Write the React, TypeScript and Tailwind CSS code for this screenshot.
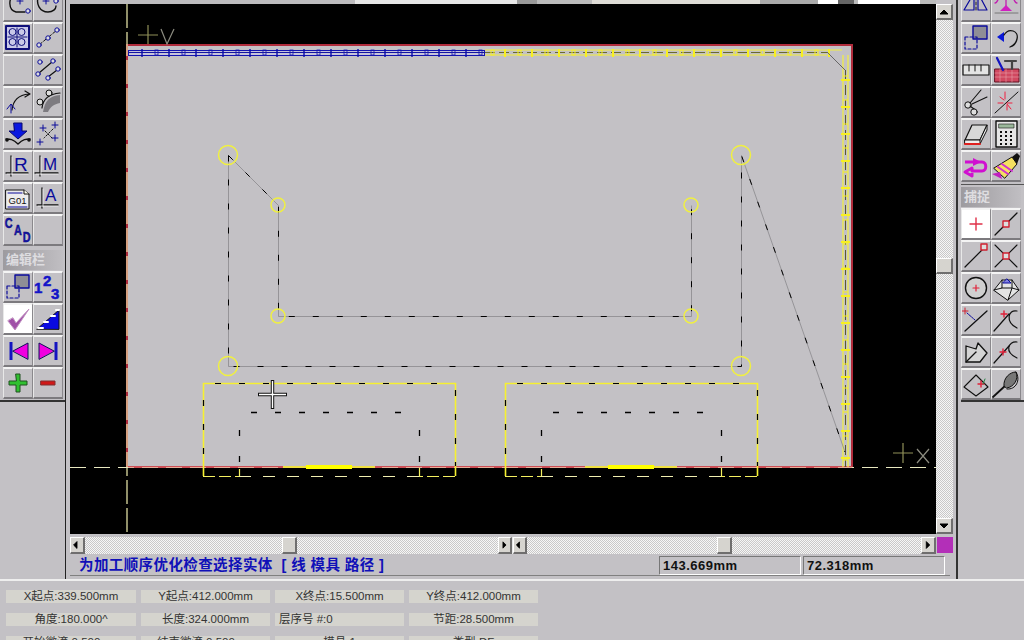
import React from "react";

const B = "#0a0a9a";
const K = "#111";
const CJK = '"Liberation Sans","Noto Sans CJK SC",sans-serif';

function Ic({ children }: { children?: React.ReactNode }) {
  return (
    <svg width="28" height="28" viewBox="0 0 28 28" fill="none" strokeLinecap="round" strokeLinejoin="round">
      {children}
    </svg>
  );
}

function Btn({ children, on }: { children?: React.ReactNode; on?: boolean }) {
  return (
    <div
      className={`flex h-[32px] w-[30px] items-center justify-center border-t-2 border-r border-b-2 border-l border-t-[#f4f4f4] border-r-[#8a888c] border-b-[#7c7a7e] border-l-[#e8e8e8] ${
        on ? "bg-white" : "bg-[#c3c1c5]"
      }`}
    >
      {children}
    </div>
  );
}

const Dot = ({ x, y, r = 2.2 }: { x: number; y: number; r?: number }) => (
  <circle cx={x} cy={y} r={r} stroke={B} strokeWidth="1" fill="#ddd" />
);
const Axes = ({ x = 8 }: { x?: number }) => (
  <g>
    <path d={`M${x} 4V24M${x - 5} 21H24`} stroke={K} strokeWidth="1.3" />
    <path d={`M${x + 1} 5V23M${x - 4} 22H24`} stroke="#fff" strokeWidth="0.7" />
  </g>
);
const Label = ({ t, x, y, s = 15 }: { t: string; x: number; y: number; s?: number }) => (
  <text x={x} y={y} fill={B} fontFamily="Liberation Sans, sans-serif" fontSize={s}>
    {t}
  </text>
);

const leftIcons: [React.ReactNode, React.ReactNode][] = [
  [
    <Ic>
      <path d="M11 2C4 6 4 18 12 20H21" stroke={K} strokeWidth="1.4" />
      <path d="M15 9H21M18 6V12" stroke={B} transform="translate(-2 0)" />
      <Dot x={24} y={19} />
    </Ic>,
    <Ic>
      <path d="M5 3C1 12 6 20 14 20C19 20 22 17 22 14" stroke={K} strokeWidth="1.4" />
      <path d="M9 9H15M12 6V12" stroke={B} />
      <Dot x={22} y={9} />
    </Ic>,
  ],
  [
    <Ic>
      <rect x="2" y="2" width="23" height="23" fill="#c9c9e8" stroke="#10107a" strokeWidth="2" />
      <path d="M5 8a3.500 3.500 0 1 1 7 0a3.500 3.500 0 1 1-7 0M14 8a3.500 3.500 0 1 1 7 0a3.500 3.500 0 1 1-7 0M5 18a3.500 3.500 0 1 1 7 0a3.500 3.500 0 1 1-7 0M14 18a3.500 3.500 0 1 1 7 0a3.500 3.500 0 1 1-7 0M4 13H23M13 4V23" stroke="#10107a" />
    </Ic>,
    <Ic>
      <path d="M5 21L23 6" stroke={K} strokeDasharray="4 2" />
      <Dot x={5} y={21} />
      <Dot x={14} y={14} />
      <Dot x={23} y={6} />
    </Ic>,
  ],
  [
    null,
    <Ic>
      <path d="M5 17L18 6M14 21L23 14" stroke={K} strokeWidth="1.2" />
      <Dot x={6} y={6} />
      <Dot x={19} y={5} />
      <Dot x={4} y={18} />
      <Dot x={14} y={22} />
      <Dot x={24} y={13} />
    </Ic>,
  ],
  [
    <Ic>
      <path d="M8 22C9 12 14 7 25 6M21 3L26 6L21 9" stroke={K} strokeWidth="1.2" />
      <path d="M7 25L7 17M3 21L7 16L11 21" stroke={B} />
    </Ic>,
    <Ic>
      <path d="M9 24C11 13 15 8 26 7V15C20 16 16 19 14 24Z" fill="#7d7b80" />
      <path d="M8 20C9 11 14 6 26 5" stroke={K} strokeWidth="1.2" />
      <circle cx="6" cy="14" r="3" stroke={K} fill="#ddd" />
      <circle cx="15" cy="5" r="3" stroke={K} fill="#ddd" />
    </Ic>,
  ],
  [
    <Ic>
      <path d="M10 3H18V11H23L14 19L5 11H10Z" fill="#0a18e0" stroke="#0a0a6a" />
      <path d="M2 19C6 19 9 19 14 24C19 19 22 19 26 19" stroke={K} strokeWidth="1.4" />
      <circle cx="3" cy="20" r="1.800" fill={K} />
      <circle cx="25" cy="20" r="1.800" fill={K} />
    </Ic>,
    <Ic>
      <path d="M9 5V11M6 8H12M21 2V8M18 5H24M6 19V25M3 22H9M21 15V21M18 18H24" stroke={B} />
      <path d="M11 11L18 18M19 9L10 18" stroke={K} strokeDasharray="2 2" />
    </Ic>,
  ],
  [
    <Ic>
      <Axes x={7} />
      <Label t="R" x={10} y={19} s={19} />
    </Ic>,
    <Ic>
      <Axes x={6} />
      <Label t="M" x={9} y={18} s={17} />
    </Ic>,
  ],
  [
    <Ic>
      <path d="M2 6H20L25 10V25H2Z" fill="#ececec" stroke={K} />
      <path d="M20 6V10H25" stroke={K} fill="#ffe" />
      <path d="M4 9H18M4 23H23" stroke={B} />
      <text x="4.500" y="20" fontFamily="Liberation Sans, sans-serif" fontSize="9.500" fill={K}>
        G01
      </text>
    </Ic>,
    <Ic>
      <Axes x={8} />
      <Label t="A" x={11} y={17} s={17} />
    </Ic>,
  ],
  [
    <svg width="28" height="28" viewBox="0 0 28 28">
      <g fontFamily="Liberation Sans, sans-serif" fontWeight="700" fill="#1414b8" stroke="#0a0a5a" strokeWidth="0.5">
        <text x="1" y="12" fontSize="15" transform="scale(0.72 1)">C</text>
        <text x="14" y="19" fontSize="15" transform="scale(0.72 1)">A</text>
        <text x="26" y="26" fontSize="15" transform="scale(0.72 1)">D</text>
      </g>
    </svg>,
    null,
  ],
];

const SelIcon = () => (
  <Ic>
    <rect x="11" y="2" width="14" height="13" fill="#8f8e96" stroke="#0a0a9a" strokeWidth="1.4" />
    <rect x="3" y="13" width="12" height="12" stroke="#0a0a9a" strokeWidth="1.2" strokeDasharray="3 2" fill="none" />
  </Ic>
);

const editIcons: [React.ReactNode, React.ReactNode][] = [
  [
    <SelIcon />,
    <svg width="28" height="28" viewBox="0 0 28 28">
      <g fontFamily="Liberation Sans, sans-serif" fontWeight="700" fill="#1414c8" stroke="#1414c8" strokeWidth="0.5">
        <text x="0" y="20" fontSize="15">1</text>
        <text x="9" y="13" fontSize="15">2</text>
        <text x="17" y="26" fontSize="15">3</text>
      </g>
    </svg>,
  ],
  [
    <Ic>
      <path d="M4 16L11 25L25 4L12 18L9 13Z" fill="#a050a8" stroke="#c090c0" />
    </Ic>,
    <Ic>
      <path d="M3 24L25 5V24Z" fill="#0a0ae0" stroke={K} />
      <path d="M4 23H9M10 17H14M17 11H21M22 5H25" stroke="#fff" strokeWidth="2" />
    </Ic>,
  ],
  [
    <Ic>
      <path d="M7 5V23" stroke="#1414c0" strokeWidth="3" strokeLinecap="butt" />
      <path d="M9 14L24 6V22Z" fill="#f000e0" stroke="#10105a" />
    </Ic>,
    <Ic>
      <path d="M22 5V23" stroke="#1414c0" strokeWidth="3" strokeLinecap="butt" />
      <path d="M20 14L5 6V22Z" fill="#f000e0" stroke="#10105a" />
    </Ic>,
  ],
  [
    <Ic>
      <path d="M12 5H16V12H23V16H16V23H12V16H5V12H12Z" fill="#30c030" stroke="#205020" />
    </Ic>,
    <Ic>
      <rect x="7" y="12" width="14" height="4" fill="#d01818" stroke="#803030" />
    </Ic>,
  ],
];

const rightIcons: [React.ReactNode, React.ReactNode][] = [
  [
    <Ic>
      <path d="M12 1L2 18H12ZM16 1V18H25Z" stroke={B} strokeWidth="1.2" fill="none" />
      <path d="M14 0V20" stroke={K} strokeDasharray="3 2" />
    </Ic>,
    <Ic>
      <path d="M2 4H26M14 0V16M7 4C6 9 4 11 3 11M21 4C22 9 24 11 25 11" stroke="#c020b0" strokeWidth="1.3" />
      <path d="M8 19L14 13L20 19Z" fill="#d020c0" />
      <path d="M3 21H26" stroke="#777" />
    </Ic>,
  ],
  [
    <SelIcon />,
    <Ic>
      <path d="M5 13L12 8V18Z" fill="#0a18d8" />
      <path d="M12 11C17 3 27 7 25 15C24 20 21 22 18 23" stroke={K} strokeWidth="1.3" />
    </Ic>,
  ],
  [
    <Ic>
      <rect x="1" y="9" width="26" height="10" fill="#e4e4e4" stroke={K} strokeWidth="1.2" />
      <path d="M7 9V15M13 9V15M19 9V15" stroke={K} />
    </Ic>,
    <Ic>
      <rect x="3" y="13" width="24" height="13" fill="#d04860" stroke="#601020" />
      <path d="M3 17H27M3 21H27M8 13V26M14 13V26M20 13V26" stroke="#e8a0a8" strokeWidth="0.6" />
      <path d="M5 2L11 14" stroke="#1414c0" strokeWidth="2.2" />
      <path d="M13 5H24M20 5V13" stroke="#444" strokeWidth="2.2" />
    </Ic>,
  ],
  [
    <Ic>
      <circle cx="6" cy="17" r="3.200" stroke={K} fill="#ddd" />
      <circle cx="12" cy="24" r="3.200" stroke={K} fill="#ddd" />
      <path d="M8 15L19 2M12 21L8 18M10 16L25 9" stroke={K} strokeWidth="1.1" />
    </Ic>,
    <Ic>
      <path d="M3 25L26 4" stroke={K} strokeWidth="1" />
      <path d="M13 4V11M8 9L12 12M6 15H11M20 15H15M19 21L15 16M15 22V17" stroke="#f02040" />
    </Ic>,
  ],
  [
    <Ic>
      <path d="M3 20L10 5H25L18 20Z" fill="#d8d8d8" stroke={K} strokeWidth="1.2" />
      <path d="M3 20H18V24H3ZM18 20L25 5V10L18 24" fill="#eee" stroke={K} />
      <path d="M3 24H18" stroke="#e02020" strokeWidth="2" />
    </Ic>,
    <Ic>
      <rect x="4" y="1" width="21" height="26" fill="#e6e6e6" stroke={K} strokeWidth="1.4" />
      <rect x="7" y="4" width="15" height="4" fill="#9bb89b" stroke={K} strokeWidth="0.6" />
      <path d="M8 12H10M13 12H15M18 12H20M8 16H10M13 16H15M18 16H20M8 20H10M13 20H15M18 20H20M8 24H10M13 24H15M18 24H20" stroke={K} strokeWidth="2" strokeLinecap="butt" />
    </Ic>,
  ],
  [
    <Ic>
      <path d="M3 10H20C25 10 25 19 20 19H10V16L3 20L10 24V21" stroke="#d010d0" strokeWidth="3" fill="none" strokeLinecap="butt" />
      <path d="M11 6L19 10L11 14Z" fill="#d010d0" />
    </Ic>,
    <Ic>
      <path d="M2 16L20 5L25 12L13 26Z" fill="#f4e060" stroke={K} />
      <path d="M6 15L16 22M10 12L20 19" stroke="#d030d0" strokeWidth="2" />
      <path d="M20 5L25 1L28 4L25 12Z" fill="#111" />
      <path d="M0 22L8 20L10 27Z" fill="#c020c0" />
    </Ic>,
  ],
];

const snapIcons: [React.ReactNode, React.ReactNode][] = [
  [
    <Ic>
      <path d="M14 8V20M8 14H20" stroke="#e03048" strokeWidth="1.4" />
    </Ic>,
    <Ic>
      <path d="M3 25L25 3" stroke={K} strokeWidth="1.2" />
      <rect x="11" y="11" width="6" height="6" fill="#ddd" stroke="#d02030" strokeWidth="1.4" />
    </Ic>,
  ],
  [
    <Ic>
      <path d="M3 25L21 7" stroke={K} strokeWidth="1.2" />
      <rect x="19" y="2" width="6" height="6" fill="#ddd" stroke="#d02030" strokeWidth="1.4" />
    </Ic>,
    <Ic>
      <path d="M3 25L25 3M3 3L25 25" stroke={K} strokeWidth="1.1" />
      <rect x="11" y="11" width="6" height="6" fill="#ddd" stroke="#d02030" strokeWidth="1.4" />
    </Ic>,
  ],
  [
    <Ic>
      <circle cx="14" cy="14" r="10.500" stroke={K} strokeWidth="1.4" fill="#cfcfcf" />
      <path d="M14 11V17M11 14H17" stroke="#e02038" strokeWidth="1.2" />
    </Ic>,
    <Ic>
      <path d="M2 16L10 6H20L27 16L16 26Z" fill="#e4e4e4" stroke={K} />
      <path d="M10 6L10 14L2 16M20 6V14L27 16M10 14H20L16 26" stroke={K} />
      <path d="M11 9H19L15 5Z" fill="#8080e0" stroke={B} />
    </Ic>,
  ],
  [
    <Ic>
      <path d="M3 25L25 5" stroke={K} strokeWidth="1.3" />
      <path d="M3 2V8M0 5H6" stroke="#d02030" />
      <path d="M5 7L13 14" stroke={B} strokeDasharray="2 1" />
    </Ic>,
    <Ic>
      <path d="M2 25L17 8" stroke={K} strokeWidth="1.2" />
      <path d="M25 5C16 3 13 16 25 22" stroke={K} strokeWidth="1.2" />
      <path d="M12 5V11M9 8H15" stroke="#e02038" strokeWidth="1.4" />
    </Ic>,
  ],
  [
    <Ic>
      <path d="M4 8V24H18L25 15L16 5L14 11L4 8" fill="#d4d4d4" stroke={K} strokeWidth="1.3" />
      <path d="M4 24L14 14" stroke={K} strokeWidth="1.3" />
    </Ic>,
    <Ic>
      <path d="M2 25L17 8" stroke={K} strokeWidth="1.2" />
      <path d="M25 4C16 3 12 14 25 20" stroke={K} strokeWidth="1.2" />
      <path d="M11 11V17M8 14H14" stroke="#e02038" strokeWidth="1.4" />
    </Ic>,
  ],
  [
    <Ic>
      <path d="M2 17L14 5L26 17L14 26Z" stroke={K} strokeWidth="1.1" />
      <path d="M19 11V17M16 14H22" stroke="#e02038" strokeWidth="1.4" />
      <path d="M23 9L21 14" stroke="#208040" />
    </Ic>,
    <Ic>
      <path d="M1 27L14 15" stroke={K} strokeWidth="1.8" />
      <path d="M12 16C11 8 18 2 24 2C27 9 22 17 15 18Z" fill="#777" stroke={K} />
      <path d="M24 2C29 10 24 20 15 19" stroke={K} />
    </Ic>,
  ],
];

function Rows({ rows, onAt }: { rows: [React.ReactNode, React.ReactNode][]; onAt?: number }) {
  return (
    <>
      {rows.map((r, i) => (
        <div key={i} className="flex">
          <Btn on={onAt === i}>{r[0]}</Btn>
          <Btn>{r[1]}</Btn>
        </div>
      ))}
    </>
  );
}

function Title({ t, cls }: { t: string; cls: string }) {
  return (
    <div
      className={`flex items-center bg-gradient-to-r from-[#9d9b9f] to-[#c0bec2] pl-[3px] text-[13px] font-bold text-[#dedde0] ${cls}`}
      style={{ fontFamily: CJK }}
    >
      {t}
    </div>
  );
}

const Track = ({ cls }: { cls: string }) => (
  <div className={`bg-[repeating-conic-gradient(#f6f6f6_0_25%,#c9c8c8_0_50%)] bg-[length:2px_2px] ${cls}`} />
);

function SBtn({ dir, cls }: { dir?: "l" | "r" | "u" | "d"; cls: string }) {
  const p = { l: "M7 3V11L3 7Z", r: "M5 3V11L9 7Z", u: "M3 9H11L7 5Z", d: "M3 5H11L7 9Z" };
  return (
    <div className={`flex shrink-0 items-center justify-center border-t border-r-2 border-b-2 border-l border-t-white border-r-[#6f6e6e] border-b-[#6f6e6e] border-l-white bg-[#d6d4cf] ${cls}`}>
      {dir && (
        <svg width="14" height="14" viewBox="0 0 14 14">
          <path d={p[dir]} fill="#000" stroke="#000" />
        </svg>
      )}
    </div>
  );
}

const seq = (a: number, b: number, s: number) => {
  const o: number[] = [];
  for (let v = a; v <= b; v += s) o.push(v);
  return o;
};

function LowerBox({ x }: { x: number }) {
  const r = x + 252;
  const blob = x + 80;
  return (
    <g>
      <path d={`M${x}.5 476V383.500H${r}.5V476`} stroke="#f6f030" strokeWidth="1.6" />
      <path d={`M${x} 476.500H${x + 36}.5V467M${r} 476.500H${x + 216}.5V467`} stroke="#f4f060" strokeWidth="1.2" strokeDasharray="12 4" />
      <path d={`M${x + 12} 383.500H${r}`} stroke="#000" strokeWidth="1.2" strokeDasharray="6 18" />
      <path d={`M${x}.5 400V466M${r}.5 390V466`} stroke="#000" strokeWidth="1.2" strokeDasharray="6 18" />
      <path d={`M${x + 48} 412.500H${x + 200}`} stroke="#000" strokeWidth="1.3" strokeDasharray="6 18" />
      <path d={`M${x + 36}.5 430V462M${x + 216}.5 430V462`} stroke="#000" strokeWidth="1.3" strokeDasharray="6 20" />
      <path d={`M${x + 36} 476.500H${x + 216}`} stroke="#f0eeb0" strokeWidth="1.2" strokeDasharray="12 12" />
      <path d={`M${blob} 467H${blob + 92}`} stroke="#f0e040" strokeWidth="2" />
      <path d={`M${blob + 23} 467H${blob + 69}`} stroke="#ffff00" strokeWidth="4" />
    </g>
  );
}

function Drawing() {
  const cross = seq(142, 480, 27);
  const box = seq(155, 480, 27);
  const ycross = seq(505, 830, 27);
  const ybox = seq(491, 830, 27);
  const vt = seq(70, 460, 24);
  return (
    <svg width="866" height="530" viewBox="70 4 866 530" fill="none" className="block bg-black">
      <rect x="127" y="45" width="725" height="422" fill="#c3c1c5" stroke="#b02c3c" strokeWidth="2" />
      <path d="M127 4V534" stroke="#f0eeb0" strokeWidth="1.2" strokeDasharray="24 4" />
      <path d="M70 467.500H936" stroke="#e8e8c0" strokeWidth="1" strokeDasharray="16 8" />
      <path d="M128 467H852" stroke="#e87070" strokeWidth="1" />
      {/* axes */}
      <path d="M138 35H158M148 25V44" stroke="#8f8f58" strokeWidth="1.2" />
      <path d="M161 29L167 44L174 29" stroke="#8c8c80" strokeWidth="1.2" />
      <path d="M893 453H913M903 443V463" stroke="#8f8f58" strokeWidth="1.2" />
      <path d="M917 449L929 463M929 449L917 463" stroke="#8c8c80" strokeWidth="1.2" />
      {/* blue strip */}
      <rect x="128.500" y="50.500" width="356" height="5" fill="#c6c4dc" stroke="#1414b0" strokeWidth="1" />
      <path d="M128 52.500H485" stroke="#1414a0" strokeWidth="1" />
      {cross.map((v) => (
        <path key={v} d={`M${v} 49V57`} stroke="#0a0aa8" strokeWidth="1.4" />
      ))}
      {box.map((v) => (
        <rect key={v} x={v} y="50" width="3" height="5" stroke="#1414b0" strokeWidth="0.8" />
      ))}
      {/* yellow strip */}
      <path d="M485 50H842M485 55H827" stroke="#f4f040" strokeWidth="1.2" />
      <path d="M485 52.500H827" stroke="#6a6a30" strokeWidth="1" strokeDasharray="10 4" />
      {ycross.map((v) => (
        <path key={v} d={`M${v} 49V57`} stroke="#f8f020" strokeWidth="2" />
      ))}
      {ybox.map((v) => (
        <rect key={v} x={v} y="50" width="3" height="5" stroke="#f8f020" strokeWidth="1" />
      ))}
      <path d="M843 55V467M848 55V467" stroke="#f4f040" strokeWidth="1.2" />
      <path d="M827 52L845 70" stroke="#666" strokeWidth="1" />
      <path d="M845.500 70V467" stroke="#5a5a30" strokeWidth="1" strokeDasharray="10 5" />
      {seq(80, 460, 27).map((v) => (
        <path key={v} d={`M841 ${v}H850`} stroke="#f8f020" strokeWidth="2" />
      ))}
      {vt.map((v) => (
        <path key={v} d={`M843 ${v + 6}H848`} stroke="#f8f020" strokeWidth="1" />
      ))}
      {/* contour */}
      <path
        d="M228.500 155.500L278.500 205.500V316.500H691.500V205.500M228.500 155.500V366.500H741.500V155.500L845 452"
        stroke="#8a898d"
        strokeWidth="0.8"
      />
      <path
        d="M228.500 155.500L278.500 205.500V316.500H691.500V205.500M228.500 155.500V366.500H741.500V155.500L845 452"
        stroke="#000"
        strokeWidth="1"
        strokeDasharray="6 18"
      />
      {[
        [228, 155],
        [741, 155],
        [228, 366],
        [741, 366],
      ].map(([x, y]) => (
        <circle key={`${x}${y}`} cx={x} cy={y} r="9.500" stroke="#f0f040" strokeWidth="1.5" />
      ))}
      {[
        [278, 205],
        [691, 205],
        [278, 316],
        [691, 316],
      ].map(([x, y]) => (
        <circle key={`${x}${y}`} cx={x} cy={y} r="7" stroke="#f0f040" strokeWidth="1.5" />
      ))}
      <LowerBox x={203} />
      <LowerBox x={505} />
      {/* crosshair cursor */}
      <path d="M258 394.500H287M272.500 380V409" stroke="#111" strokeWidth="3.4" strokeLinecap="butt" />
      <path d="M259 394.500H286M272.500 381V408" stroke="#fff" strokeWidth="1.4" strokeLinecap="butt" />
    </svg>
  );
}

const cells: { t: string; left?: boolean }[] = [
  { t: "X起点:339.500mm" },
  { t: "Y起点:412.000mm" },
  { t: "X终点:15.500mm" },
  { t: "Y终点:412.000mm" },
  { t: "角度:180.000^" },
  { t: "长度:324.000mm" },
  { t: "层序号 #:0", left: true },
  { t: "节距:28.500mm" },
  { t: "开始微滴:0.500mm" },
  { t: "结束微滴:0.500mm" },
  { t: "模具:1" },
  { t: "类型:DF" },
];

const strip: [string, string][] = [
  ["w-[285px]", "bg-[#bdbcbe]"],
  ["w-[162px]", "bg-[#e6e6e6]"],
  ["w-[20px]", "bg-[#999999]"],
  ["w-[55px]", "bg-[#bbbbbb]"],
  ["w-[168px]", "bg-[#dedcd6]"],
  ["w-[58px]", "bg-[#aaaaaa]"],
  ["w-[20px]", "bg-white"],
  ["w-[16px]", "bg-[#666666]"],
  ["w-[4px]", "bg-[#bbbbbb]"],
  ["w-[62px]", "bg-white"],
  ["w-[16px]", "bg-[#bbbbbb]"],
];

export default function App() {
  return (
    <div className="flex h-[640px] w-[1024px] flex-col overflow-hidden bg-[#c3c1c5]" style={{ fontFamily: CJK }}>
      <div className="flex h-[579px] shrink-0">
        {/* left toolbar */}
        <aside className="flex w-[66px] shrink-0 flex-col overflow-hidden border-r border-r-[#222]">
          <div className="-mt-[10px] flex h-[412px] shrink-0 flex-col border-b-2 border-b-[#333] pl-[3px]">
            <Rows rows={leftIcons} />
            <Title t="编辑栏" cls="mt-[4px] mb-[1px] h-[20px] w-[60px]" />
            <Rows rows={editIcons} onAt={1} />
          </div>
        </aside>

        {/* centre */}
        <main className="flex w-[892px] shrink-0 flex-col border-r-2 border-r-[#333] pl-[4px]">
          <div className="flex h-[4px] shrink-0">
            {strip.map(([w, c], i) => (
              <div key={i} className={`${w} ${c}`} />
            ))}
          </div>
          <div className="flex h-[530px] shrink-0">
            <Drawing />
            <div className="flex w-[17px] shrink-0 flex-col">
              <SBtn dir="u" cls="h-[16px] w-[17px]" />
              <Track cls="h-[238px] w-[17px]" />
              <SBtn cls="h-[16px] w-[17px]" />
              <Track cls="h-[244px] w-[17px]" />
              <SBtn dir="d" cls="h-[16px] w-[17px]" />
            </div>
          </div>
          <div className="mt-[3px] flex h-[17px] shrink-0">
            <SBtn dir="l" cls="h-[17px] w-[15px]" />
            <Track cls="w-[197px]" />
            <SBtn cls="h-[17px] w-[15px]" />
            <Track cls="w-[201px]" />
            <SBtn dir="r" cls="h-[17px] w-[14px]" />
            <div className="w-px bg-[#e8e8e8]" />
            <SBtn dir="l" cls="h-[17px] w-[14px]" />
            <Track cls="w-[190px]" />
            <SBtn cls="h-[17px] w-[15px]" />
            <Track cls="w-[189px]" />
            <SBtn dir="r" cls="h-[17px] w-[15px]" />
            <div className="ml-[1px] h-[16px] w-[16px] bg-[#b32fb8]" />
          </div>
          <div className="mt-[2px] flex h-[20px] w-[880px] shrink-0 items-center border-b border-b-[#808080]">
            <div className="w-[589px] pl-[9px] text-[14.5px] leading-none font-bold tracking-[0.4px] whitespace-pre text-[#1010b8]">
              为加工顺序优化检查选择实体  [ 线 模具 路径 ]
            </div>
            <div className="flex h-[19px] w-[142px] items-center border border-t-[#777] border-r-white border-b-white border-l-[#777] pl-[3px] text-[13px] font-bold tracking-[0.5px] text-[#111]">
              143.669mm
            </div>
            <div className="ml-[2px] flex h-[19px] w-[142px] items-center border border-t-[#777] border-r-white border-b-white border-l-[#777] pl-[3px] text-[13px] font-bold tracking-[0.5px] text-[#111]">
              72.318mm
            </div>
          </div>
        </main>

        {/* right toolbar */}
        <aside className="w-[66px] shrink-0 overflow-hidden pl-[3px]">
          <div className="-mt-[10px] flex h-[412px] flex-col border-b-2 border-b-[#333]">
            <Rows rows={rightIcons} />
            <div className="mt-[2px] border-t border-t-[#555]" />
            <Title t="捕捉" cls="mt-[2px] mb-[1px] h-[20px] w-[60px]" />
            <Rows rows={snapIcons} onAt={0} />
          </div>
        </aside>
      </div>

      {/* properties panel */}
      <section className="grow border-t-2 border-t-[#eeeeee] pt-[9px] pl-[6px]">
        <div className="grid w-[540px] grid-cols-[130px_129px_129px_129px] gap-x-[5px] gap-y-[10px]">
          {cells.map((c) => (
            <div
              key={c.t}
              className={`flex h-[13px] items-center bg-[#d5d4ce] text-[11.500px] leading-none whitespace-pre text-[#333] ${
                c.left ? "justify-start pl-[4px]" : "justify-center"
              }`}
            >
              {c.t}
            </div>
          ))}
        </div>
      </section>
    </div>
  );
}
